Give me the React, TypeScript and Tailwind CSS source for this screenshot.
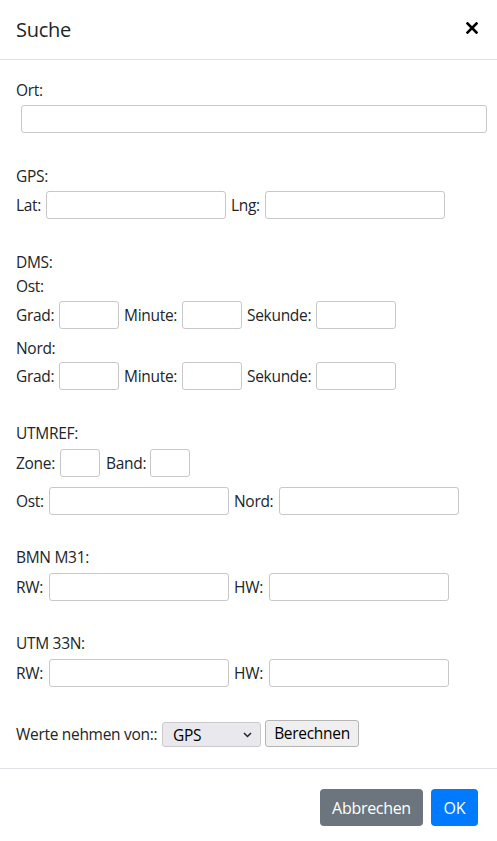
import React from "react";

const inputCls = "h-[28px] border border-[#c8c8c8] rounded-[3px] bg-white shrink-0";

function Lbl({ w, children }: { w: number; children: React.ReactNode }) {
  return (
    <span className="shrink-0 whitespace-nowrap" style={{ width: w }}>
      {children}
    </span>
  );
}

export default function App() {
  return (
    <div
      className="w-[497px] h-[841px] bg-white text-[#212529] text-[16px] leading-[24px] overflow-hidden"
      style={{ fontFamily: '"Open Sans", "Noto Sans", Arial, sans-serif' }}
    >
      {/* Header */}
      <div className="h-[60px] border-b border-[#dee2e6] flex items-center justify-between pl-[16px] pr-[19px]">
        <h5 className="text-[20px] leading-[30px] tracking-[-0.3px]">Suche</h5>
        <svg width="12" height="12" viewBox="0 0 12 12" className="mt-[-4px]">
          <path d="M1.5 1.5 L10.5 10.5 M10.5 1.5 L1.5 10.5" stroke="#000" strokeWidth="2.6" strokeLinecap="square" />
        </svg>
      </div>

      {/* Body */}
      <div className="px-[16px] pt-[18px] text-[15.5px] tracking-[-0.3px]">
        <div>Ort:</div>
        <div className="mt-[3px] pl-[5px]">
          <input className={`${inputCls} w-[466px] block`} />
        </div>

        <div className="mt-[31px]">GPS:</div>
        <div className="mt-[3px] flex items-center">
          <Lbl w={30}>Lat:</Lbl>
          <input className={`${inputCls} w-[180px]`} />
          <span className="ml-[5px] shrink-0 w-[34px]">Lng:</span>
          <input className={`${inputCls} w-[180px]`} />
        </div>

        <div className="mt-[31px]">DMS:</div>
        <div>Ost:</div>
        <div className="mt-[3px] flex items-center">
          <Lbl w={43}>Grad:</Lbl>
          <input className={`${inputCls} w-[60px]`} />
          <span className="ml-[5px] shrink-0 w-[58px]">Minute:</span>
          <input className={`${inputCls} w-[60px]`} />
          <span className="ml-[5px] shrink-0 w-[69px]">Sekunde:</span>
          <input className={`${inputCls} w-[80px]`} />
        </div>
        <div className="mt-[7px]">Nord:</div>
        <div className="mt-[2px] flex items-center">
          <Lbl w={43}>Grad:</Lbl>
          <input className={`${inputCls} w-[60px]`} />
          <span className="ml-[5px] shrink-0 w-[58px]">Minute:</span>
          <input className={`${inputCls} w-[60px]`} />
          <span className="ml-[5px] shrink-0 w-[69px]">Sekunde:</span>
          <input className={`${inputCls} w-[80px]`} />
        </div>

        <div className="mt-[31px]">UTMREF:</div>
        <div className="mt-[4px] flex items-center">
          <Lbl w={44}>Zone:</Lbl>
          <input className={`${inputCls} w-[40px]`} />
          <span className="ml-[6px] shrink-0 w-[44px]">Band:</span>
          <input className={`${inputCls} w-[40px]`} />
        </div>
        <div className="mt-[10px] flex items-center">
          <Lbl w={33}>Ost:</Lbl>
          <input className={`${inputCls} w-[180px]`} />
          <span className="ml-[5px] shrink-0 w-[45px]">Nord:</span>
          <input className={`${inputCls} w-[180px]`} />
        </div>

        <div className="mt-[30px]">BMN M31:</div>
        <div className="mt-[4px] flex items-center">
          <Lbl w={33}>RW:</Lbl>
          <input className={`${inputCls} w-[180px]`} />
          <span className="ml-[5px] shrink-0 w-[35px]">HW:</span>
          <input className={`${inputCls} w-[180px]`} />
        </div>

        <div className="mt-[30px]">UTM 33N:</div>
        <div className="mt-[4px] flex items-center">
          <Lbl w={33}>RW:</Lbl>
          <input className={`${inputCls} w-[180px]`} />
          <span className="ml-[5px] shrink-0 w-[35px]">HW:</span>
          <input className={`${inputCls} w-[180px]`} />
        </div>

        <div className="mt-[33px] h-[27px] flex items-center">
          <Lbl w={146}>Werte nehmen von::</Lbl>
          <div className="relative w-[99px] h-[25px] mt-[2px] rounded-[3px] border border-[#c9c9cf] bg-[#e9e9ed] flex items-center pl-[10px] text-[15.5px] text-black shrink-0">
            GPS
            <svg className="absolute right-[8px] top-[9px]" width="9" height="6" viewBox="0 0 9 6">
              <path d="M1 1 L4.5 4.5 L8 1" stroke="#222" strokeWidth="1.5" fill="none" />
            </svg>
          </div>
          <button className="ml-[4px] w-[94px] h-[27px] rounded-[3px] border border-[#b5b5b5] bg-[#efefef] text-black text-[15.5px] leading-none shrink-0">
            Berechnen
          </button>
        </div>
      </div>

      {/* Footer */}
      <div className="mt-[21px] border-t border-[#dee2e6] flex justify-end pr-[19px] pt-[20px] gap-[8px]">
        <button className="w-[103px] h-[37px] rounded-[4px] bg-[#6c757d] text-white text-[16px] tracking-[-0.3px]">
          Abbrechen
        </button>
        <button className="w-[47px] h-[37px] rounded-[4px] bg-[#007bff] text-white text-[16px]">OK</button>
      </div>
    </div>
  );
}
